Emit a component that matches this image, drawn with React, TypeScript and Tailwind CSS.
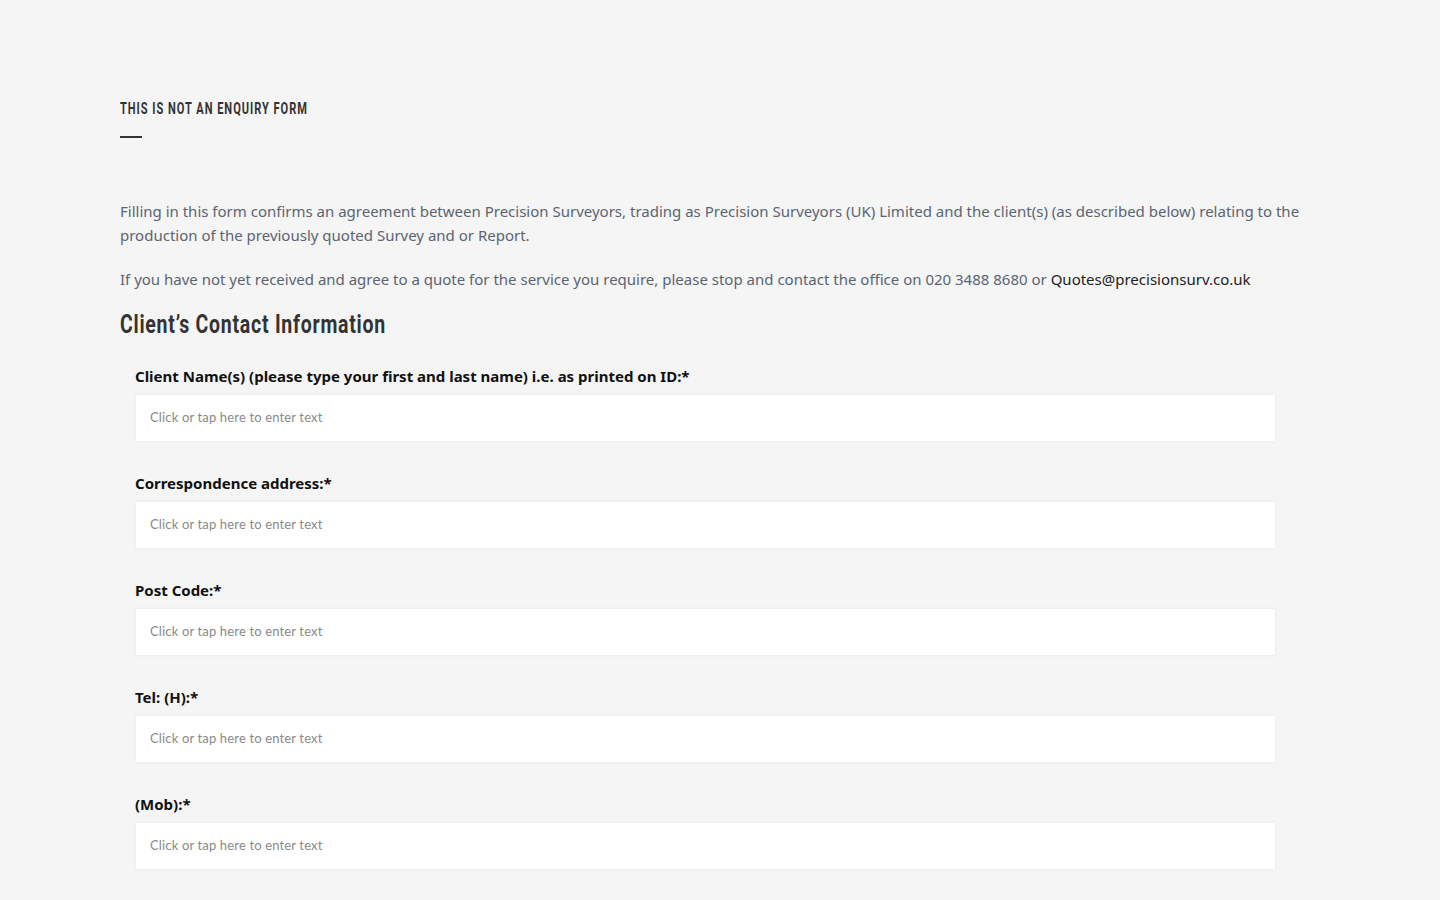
import * as React from 'react';

const FIELDS = [
  'Client Name(s) (please type your first and last name) i.e. as printed on ID:*',
  'Correspondence address:*',
  'Post Code:*',
  'Tel: (H):*',
  '(Mob):*',
];

function Field({ label }: { label: string }) {
  return (
    <div className="flex flex-col">
      <label className="pl-[15px] text-[15px] leading-[24px] font-bold text-[#111] font-['Noto_Sans',sans-serif]">
        {label}
      </label>
      <div className="mt-[7px] ml-[16px] mr-[45px] flex h-[46px] items-center bg-white px-[14px] shadow-[0_0_4px_rgba(0,0,0,0.05)]">
        <span className="text-[13px] tracking-[0.15px] text-[#8a8a8a] font-['Lato',sans-serif]">
          Click or tap here to enter text
        </span>
      </div>
    </div>
  );
}

export default function App() {
  return (
    <div className="min-h-[900px] bg-[#f5f5f5] px-[120px] pt-[97px]">
      {/* no condensed face installed, so the DIN-like headings are narrowed */}
      <h4 className="origin-left scale-x-[0.65] text-[17px] leading-[22px] font-bold uppercase tracking-[1.5px] text-[#333] font-['Roboto',sans-serif]">
        This is not an enquiry form
      </h4>
      <div className="mt-[17px] h-[2px] w-[22px] bg-[#333]" />

      <div className="mt-[61px] flex flex-col gap-[20px] text-[15px] leading-[24px] text-[#5b6472] font-['Noto_Sans',sans-serif]">
        <p>
          Filling in this form confirms an agreement between Precision Surveyors, trading as Precision Surveyors (UK)
          Limited and the client(s) (as described below) relating to the production of the previously quoted Survey and
          or Report.
        </p>
        <p>
          If you have not yet received and agree to a quote for the service you require, please stop and contact the
          office on 020 3488 8680 or <a className="text-[#222]">Quotes@precisionsurv.co.uk</a>
        </p>
      </div>

      <h2 className="mt-[16px] origin-left scale-x-[0.75] text-[26px] leading-[34px] font-bold tracking-[1px] text-[#333] font-['Roboto',sans-serif]">
        Client’s Contact Information
      </h2>

      <div className="mt-[23px] flex flex-col gap-[30px]">
        {FIELDS.map((f) => (
          <Field key={f} label={f} />
        ))}
      </div>
    </div>
  );
}
